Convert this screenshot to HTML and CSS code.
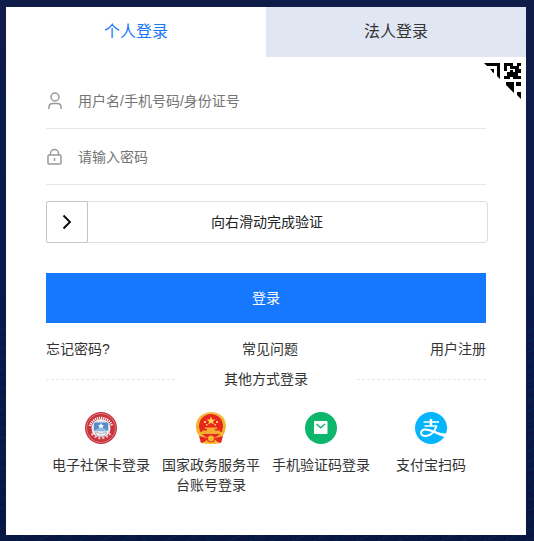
FILE: index.html
```html
<!DOCTYPE html>
<html lang="zh-CN">
<head>
  <meta charset="UTF-8">
  <meta name="viewport" content="width=device-width, initial-scale=1.0">
  <title>个人登录</title>
  <link rel="stylesheet" href="styles.css">
</head>
<body>
  <main class="login-card">
    <div class="tabs" role="tablist">
      <button class="tab active" type="button" role="tab" aria-selected="true">个人登录</button>
      <button class="tab" type="button" role="tab" aria-selected="false">法人登录</button>
    </div>

    <button class="qr-switch" type="button" aria-label="扫码登录">
      <svg width="37" height="37" viewBox="0 0 37 37">
        <path d="M0 1H16V17L13 14V4H3ZM6 7H10V11L8 10V9Z"/>
        <path d="M20 1H29V7H26V4H23V9H20ZM33 1H37V4H35V7H37V11H34V14H37V17H29V15H26V17H20V14H23V10H26V8H29V10H31V7H29V4H33Z"/>
        <path d="M22 20H30V31L22 23ZM32 20H37V24H32ZM33 30H37V37L33 33Z"/>
      </svg>
    </button>

    <form class="login-form">
      <div class="field">
        <label for="username" aria-label="用户名">
          <svg class="field-icon" width="18" height="18" viewBox="0 0 18 18">
            <circle cx="9" cy="5" r="4"/>
            <path d="M3 17V15Q3 11.500 7 11.500H11Q15 11.500 15 15V17"/>
          </svg>
        </label>
        <input type="text" id="username" placeholder="用户名/手机号码/身份证号">
      </div>
      <div class="field">
        <label for="password" aria-label="密码">
          <svg class="field-icon" width="18" height="18" viewBox="0 0 18 18">
            <rect x="2" y="7" width="13" height="9" rx="1"/>
            <path d="M4.500 7V5.500A4 4 0 0 1 12.500 5.500V7M8.500 10V13"/>
          </svg>
        </label>
        <input type="password" id="password" placeholder="请输入密码">
      </div>

      <div class="slider">
        <label for="verify">向右滑动完成验证</label>
        <input type="range" id="verify" min="0" max="100" value="0">
      </div>

      <button class="submit" type="button">登录</button>
    </form>

    <nav class="links">
      <a href="#">忘记密码?</a>
      <a href="#">常见问题</a>
      <a href="#">用户注册</a>
    </nav>

    <div class="divider"><span>其他方式登录</span></div>

    <div class="others">
      <a class="other" href="#">
        <svg width="32" height="32" viewBox="0 0 32 32">
          <circle cx="16" cy="16" r="16" fill="#c9343d"/>
          <circle cx="16" cy="16" r="14.500" fill="none" stroke="#e7a5a9" stroke-width=".6"/>
          <path d="M5 14A11.500 11.500 0 0 1 27 14" fill="none" stroke="#fff" stroke-width="2.400" stroke-dasharray="1.200 .9"/>
          <circle cx="16" cy="16.500" r="9.500" fill="#f8e9ea"/>
          <path d="M5 20Q16 30 27 20L26 25Q16 34 6 25Z" fill="#c9343d"/>
          <path d="M6.500 21.500Q16 31 25.500 21.500" fill="none" stroke="#efc0c3" stroke-width="2.400" stroke-dasharray="2.200 1.800"/>
          <rect x="8.500" y="10" width="15" height="9.500" rx="2" fill="#548dc8" stroke="#cfdcec"/>
          <path d="M10 18Q16 14 22 18V19H10Z" fill="#91b8df"/>
          <path d="M16 11L17 13L19 13L17.500 14.500L18 16.500L16 15.500L14 16.500L14.500 14.500L13 13L15 13Z" fill="#fff"/>
          <path d="M10 21Q13 20 16 22Q19 20 22 21L19 24H13Z" fill="#fff" stroke="#777f9b" stroke-width=".6"/>
        </svg>
        <span>电子社保卡登录</span>
      </a>
      <a class="other" href="#">
        <svg width="32" height="32" viewBox="0 0 32 32">
          <path d="M5 25Q0 20 1 12Q3 3 11 1Q16-1 22 1Q30 4 31 13Q31 20 27 25L26 31L20 32H12L6 31Z" fill="#f3bb35"/>
          <circle cx="16" cy="14" r="12" fill="#e8251f"/>
          <path d="M16 4.500L17.200 7.500H20.500L17.900 9.400L18.900 12.500L16 10.700L13.100 12.500L14.100 9.400L11.500 7.500H14.800Z" fill="#ffd651"/>
          <path d="M9 9H11V11H9ZM21 9H23V11H21ZM11 12H12.500V13.500H11ZM19.500 12H21V13.500H19.500Z" fill="#ffd651"/>
          <path d="M10 15.500H22V17H20V18.500H25V20H26V22H6V20H7V18.500H12V17H10Z" fill="#f5ad2f"/>
          <path d="M4 24L12 26L16 24L20 26L28 24L26 31L20 29L16 31L12 29L6 31Z" fill="#e8251f"/>
          <circle cx="16" cy="26.500" r="3" fill="#f5b932"/>
          <path d="M12 28L10 31M20 28L22 31M14 31H18" stroke="#f5c641" stroke-width="1.200"/>
          <path d="M3 9L5 11M2 15H4M3 20L5 19M29 9L27 11M30 15H28M29 20L27 19" stroke="#df8c21" stroke-width=".7"/>
        </svg>
        <span>国家政务服务平台账号登录</span>
      </a>
      <a class="other" href="#">
        <svg width="32" height="32" viewBox="0 0 32 32">
          <circle cx="16" cy="16" r="16" fill="#0cb76b"/>
          <rect x="9" y="9" width="13.500" height="13" rx=".7" fill="#fff"/>
          <path d="M11.500 12L15.700 15.800L20 12" fill="none" stroke="#0cb76b" stroke-width="1.400"/>
        </svg>
        <span>手机验证码登录</span>
      </a>
      <a class="other" href="#">
        <svg width="32" height="32" viewBox="0 0 32 32">
          <circle cx="16" cy="16" r="16" fill="#06b4fd"/>
          <g fill="none" stroke="#fff">
            <path d="M8.500 10H24M9.500 14H22" stroke-width="1.500"/>
            <path d="M16 7V14" stroke-width="2.500"/>
            <path d="M21.500 14C20 19 16 24 11 24C4.500 24 4.500 17.500 10.500 17.500C16 17.500 20 21 30 24" stroke-width="2"/>
          </g>
          <path d="M18 18.500Q24 21 31.300 21.500L29.500 25Q24 23.500 17 20Z" fill="#fff"/>
        </svg>
        <span>支付宝扫码</span>
      </a>
    </div>
  </main>
</body>
</html>
```
FILE: styles.css
```css
body {
  margin: 0;
  padding: 7px 8px 6px 6px;
  background:
    repeating-linear-gradient(155deg, rgba(0, 65, 130, 0) 0 7px, rgba(0, 65, 130, 0.3) 8px, rgba(0, 65, 130, 0) 9px) bottom / 100% 220px no-repeat,
    linear-gradient(#101c48, #091a4d 50%, #081641);
  font-family: "Liberation Sans", "Noto Sans CJK SC", sans-serif;
  font-size: 14px;
  line-height: 20px;
  color: #333;
}

button,
input {
  font: inherit;
}

a {
  color: inherit;
  text-decoration: none;
}

.login-card {
  position: relative;
  background: #fff;
  padding-bottom: 40px;
}

.tabs {
  display: flex;
}

.tab {
  flex: 1;
  height: 50px;
  padding: 0;
  border: none;
  background: #e0e6f2;
  color: #333;
  font-size: 16px;
  cursor: pointer;
}

.tab.active {
  background: #fff;
  color: #1677ff;
}

/* folded corner that switches to QR login */
.qr-switch {
  position: absolute;
  top: 55px;
  right: 5px;
  padding: 0;
  border: none;
  background: none;
  cursor: pointer;
}

.qr-switch svg {
  display: block;
}

.login-form {
  padding: 16px 40px 0;
}

.field {
  display: flex;
  align-items: center;
  gap: 14px;
  height: 55px;
  border-bottom: 1px solid #e6e6e6;
}

.field label,
.field-icon {
  display: block;
}

.field-icon {
  fill: none;
  stroke: #999;
  stroke-width: 1.5;
}

.field input {
  flex: 1;
  min-width: 0;
  padding: 0;
  border: none;
  outline: none;
  background: none;
}

.field input::placeholder {
  color: #757575;
}

.slider {
  display: grid;
  width: 100%;
  height: 40px;
  margin-top: 16px;
  border: 1px solid #ddd;
  border-radius: 4px;
}

.slider label,
.slider input {
  grid-area: 1 / 1;
}

.slider label {
  align-self: center;
  text-align: center;
  color: #222;
}

.slider input {
  appearance: none;
  width: auto;
  height: 42px;
  margin: -1px;
  background: none;
  cursor: pointer;
}

.slider input::-webkit-slider-thumb {
  appearance: none;
  box-sizing: border-box;
  width: 42px;
  height: 42px;
  border: 1px solid #c4c4c4;
  border-radius: 2px;
  background: #fff url("data:image/svg+xml,%3Csvg xmlns='http://www.w3.org/2000/svg' width='16' height='16' fill='none' stroke='black' stroke-width='1.8'%3E%3Cpath d='M4.500 1.500L11 8L4.500 14.500'/%3E%3C/svg%3E") center no-repeat;
}

.submit {
  display: block;
  width: 100%;
  height: 50px;
  margin-top: 30px;
  border: none;
  background: #1677ff;
  color: #fff;
  cursor: pointer;
}

.links {
  display: flex;
  justify-content: space-between;
  padding: 16px 40px 0;
}

.divider {
  display: flex;
  align-items: center;
  gap: 49px;
  margin-top: 10px;
  padding: 0 40px;
}

.divider::before,
.divider::after {
  content: "";
  flex: 1;
  border-top: 1px dashed #e6e6e6;
}

.others {
  display: flex;
  padding: 23px 40px 0;
}

.other {
  flex: 1;
  display: flex;
  flex-direction: column;
  align-items: center;
  gap: 11px;
  padding: 0 5px;
  text-align: center;
}
```
